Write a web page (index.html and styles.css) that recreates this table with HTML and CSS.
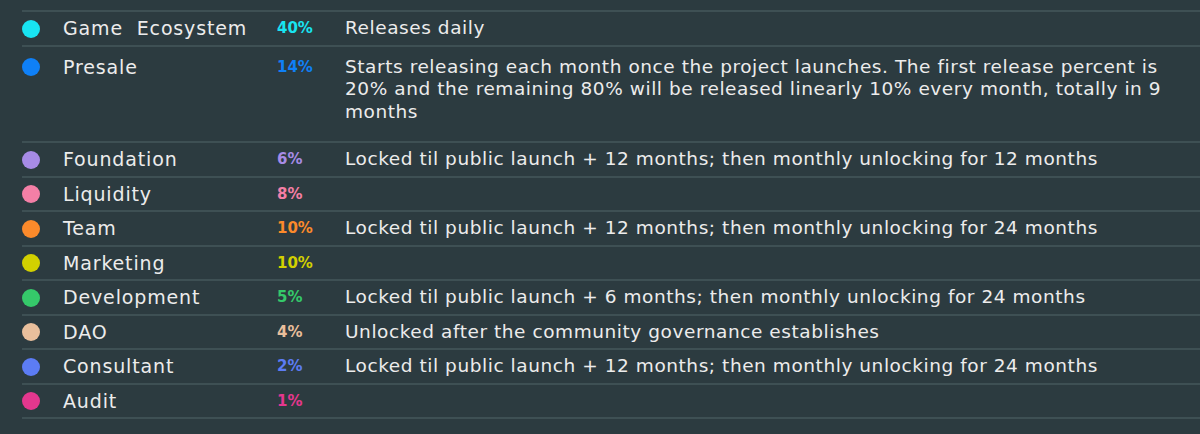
FILE: index.html
```html
<!DOCTYPE html>
<html lang="en">
<head>
<meta charset="utf-8">
<title>Token allocation</title>
<link rel="stylesheet" href="styles.css">
</head>
<body>
<div class="table">
  <div class="row">
    <span class="dot c-cyan"></span>
    <span class="name">Game&nbsp; Ecosystem</span>
    <span class="pct t-cyan">40%</span>
    <span class="desc">Releases daily</span>
  </div>
  <div class="row tall">
    <span class="dot c-blue"></span>
    <span class="name">Presale</span>
    <span class="pct t-blue">14%</span>
    <span class="desc">Starts releasing each month once the project launches. The first release percent is 20% and the remaining 80% will be released linearly 10% every month, totally in 9 months</span>
  </div>
  <div class="row">
    <span class="dot c-purple"></span>
    <span class="name">Foundation</span>
    <span class="pct t-purple">6%</span>
    <span class="desc">Locked til public launch + 12 months; then monthly unlocking for 12 months</span>
  </div>
  <div class="row">
    <span class="dot c-pink"></span>
    <span class="name">Liquidity</span>
    <span class="pct t-pink">8%</span>
    <span class="desc"></span>
  </div>
  <div class="row">
    <span class="dot c-orange"></span>
    <span class="name">Team</span>
    <span class="pct t-orange">10%</span>
    <span class="desc">Locked til public launch + 12 months; then monthly unlocking for 24 months</span>
  </div>
  <div class="row">
    <span class="dot c-yellow"></span>
    <span class="name">Marketing</span>
    <span class="pct t-yellow">10%</span>
    <span class="desc"></span>
  </div>
  <div class="row">
    <span class="dot c-green"></span>
    <span class="name">Development</span>
    <span class="pct t-green">5%</span>
    <span class="desc">Locked til public launch + 6 months; then monthly unlocking for 24 months</span>
  </div>
  <div class="row">
    <span class="dot c-peach"></span>
    <span class="name">DAO</span>
    <span class="pct t-peach">4%</span>
    <span class="desc">Unlocked after the community governance establishes</span>
  </div>
  <div class="row">
    <span class="dot c-indigo"></span>
    <span class="name">Consultant</span>
    <span class="pct t-indigo">2%</span>
    <span class="desc">Locked til public launch + 12 months; then monthly unlocking for 24 months</span>
  </div>
  <div class="row">
    <span class="dot c-magenta"></span>
    <span class="name">Audit</span>
    <span class="pct t-magenta">1%</span>
    <span class="desc"></span>
  </div>
</div>
</body>
</html>
```
FILE: styles.css
```css
html, body {
  margin: 0;
  padding: 0;
  background: #2c3b40;
  overflow: hidden;
}
body {
  font-family: "DejaVu Sans", "Noto Sans", sans-serif;
  color: #ececec;
  padding: 10px 0 0 22px;
}
.table {
  border-top: 2px solid #3e5054;
  width: 1200px;
}
.row {
  display: grid;
  grid-template-columns: 41px 214px 68px 1fr;
  align-items: start;
  padding: 5px 0;
  line-height: 22.5px;
  border-bottom: 2px solid #3e5054;
}
.row.tall {
  padding: 9px 0 18px;
}
.dot {
  width: 18px;
  height: 18px;
  border-radius: 50%;
  margin-top: 2.5px;
}
.name {
  font-size: 19px;
  letter-spacing: 0.85px;
  white-space: nowrap;
}
.pct {
  font-size: 15px;
  font-weight: 700;
}
.desc {
  font-size: 18.5px;
  letter-spacing: 0.56px;
  padding-right: 30px;
}
.c-cyan { background: #18e4f2; }
.c-blue { background: #0f80f7; }
.c-purple { background: #a78be6; }
.c-pink { background: #f47fa6; }
.c-orange { background: #fb8a2b; }
.c-yellow { background: #d2d000; }
.c-green { background: #35c96a; }
.c-peach { background: #e9bf9c; }
.c-indigo { background: #5c7cf4; }
.c-magenta { background: #e4378e; }
.t-cyan { color: #18e4f2; }
.t-blue { color: #0f80f7; }
.t-purple { color: #a78be6; }
.t-pink { color: #f47fa6; }
.t-orange { color: #fb8a2b; }
.t-yellow { color: #d2d000; }
.t-green { color: #35c96a; }
.t-peach { color: #e9bf9c; }
.t-indigo { color: #5c7cf4; }
.t-magenta { color: #e4378e; }
```
